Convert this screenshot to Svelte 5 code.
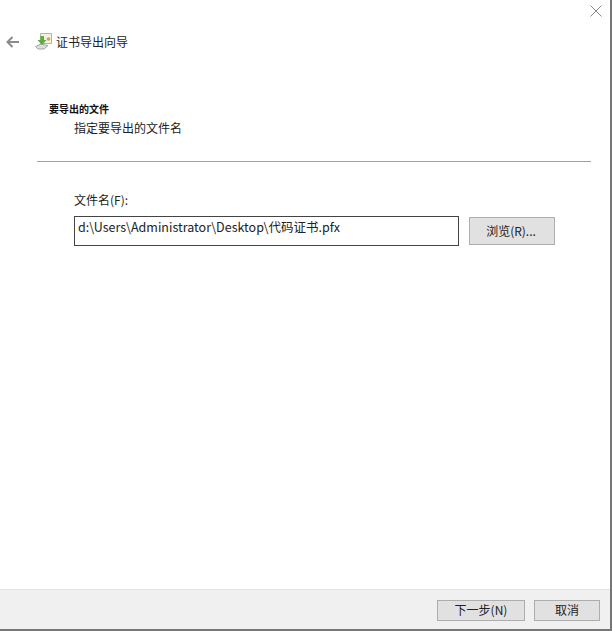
<script>
	const title = "证书导出向导";
</script>

<div class="wizard">
	<button class="close" aria-label="关闭">
		<svg width="12" height="12" viewBox="0 0 12 12"><path d="M0.5 0.5 11.5 11.5M11.5 0.5 0.5 11.5" stroke="#888" fill="none" /></svg>
	</button>

	<div class="head">
		<svg class="back" width="14" height="12" viewBox="0 0 14 12"><path d="M13 6H2M6.500 1 1.500 6l5 5" stroke="#8a8a8a" stroke-width="2" fill="none" /></svg>
		<svg class="logo" width="17" height="18" viewBox="0 0 17 18">
			<path d="M5.500 1.500h11v10h-11z" fill="#f2f1e2" stroke="#b5b59c" />
			<path d="M0.500 14.500 6 12l7 1.500-4 3.500H3z" fill="#dcdfdc" stroke="#8f9690" stroke-width="0.800" />
			<path d="M5.500 4h3.500v4h2.500L7 13 2.500 8h3z" fill="#62ab42" />
			<circle cx="13.500" cy="7" r="1.800" fill="#cfa548" />
		</svg>
		<span>{title}</span>
	</div>

	<div class="intro">
		<h1>要导出的文件</h1>
		<p>指定要导出的文件名</p>
	</div>

	<hr />

	<div class="form">
		<label for="file">文件名(F):</label>
		<div class="row">
			<input id="file" value="d:\Users\Administrator\Desktop\代码证书.pfx" />
			<button class="btn browse">浏览(R)...</button>
		</div>
	</div>

	<div class="footer">
		<button class="btn next">下一步(N)</button>
		<button class="btn cancel">取消</button>
	</div>
</div>

<style>
	:global(body) {
		background: #fff;
	}

	.wizard {
		position: relative;
		box-sizing: border-box;
		width: 612px;
		height: 631px;
		display: flex;
		flex-direction: column;
		background: #fff;
		border-right: 2px solid #777;
		border-bottom: 2px solid #777;
		font-family: "Noto Sans CJK SC", "Liberation Sans", sans-serif;
		font-size: 12px;
		color: #222;
	}

	.close {
		position: absolute;
		top: 5px;
		right: 8px;
		padding: 0;
		border: 0;
		background: none;
		line-height: 0;
	}

	.head {
		display: flex;
		align-items: center;
		height: 20px;
		margin-top: 31px;
		padding-left: 6px;
	}

	.back {
		margin-right: 15px;
		margin-top: 2px;
	}

	.logo {
		margin-right: 4px;
	}

	.intro {
		margin-top: 51px;
		padding-left: 49px;
	}

	h1 {
		margin: 0;
		font-size: 10px;
		line-height: 14px;
		font-weight: 700;
		color: #111;
	}

	p {
		margin: 3px 0 0 25px;
		line-height: 18px;
	}

	hr {
		width: 554px;
		margin: 24px 0 0 37px;
		border: 0;
		border-top: 1px solid #a0a0a0;
	}

	.form {
		margin-top: 29px;
		padding-left: 74px;
	}

	label {
		display: block;
		line-height: 18px;
	}

	.row {
		display: flex;
		align-items: center;
		gap: 10px;
		margin-top: 7px;
	}

	input {
		box-sizing: border-box;
		width: 385px;
		height: 30px;
		padding: 0 3px 9px;
		border: 1px solid #444;
		font: inherit;
		font-size: 12.5px;
		color: #222;
	}

	.btn {
		box-sizing: border-box;
		height: 21px;
		padding: 0 0 2px;
		border: 1px solid #adadad;
		background: #e1e1e1;
		font: inherit;
		color: #222;
	}

	.browse {
		width: 86px;
		height: 28px;
		padding-right: 2px;
	}

	.footer {
		flex: 1;
		display: flex;
		justify-content: flex-end;
		gap: 9px;
		margin-top: 343px;
		padding: 10px 10px 0 0;
		background: #f0f0f0;
		border-top: 1px solid #e2e2e2;
	}

	.next {
		width: 88px;
	}

	.cancel {
		width: 66px;
	}
</style>
